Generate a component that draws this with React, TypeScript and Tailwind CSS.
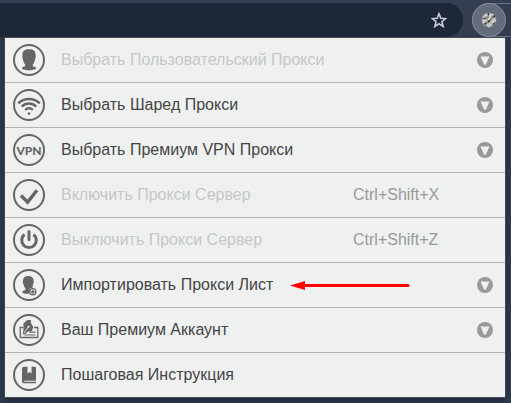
import React from 'react';

type MenuItem = {
  label: string;
  icon: React.ReactNode;
  disabled?: boolean;
  shortcut?: string;
  expandable?: boolean;
  highlighted?: boolean;
};

const RoundIcon = ({ children }: { children: React.ReactNode }) => (
  <svg viewBox="0 0 32 32" className="w-8 h-8 shrink-0 text-[#666666]" fill="currentColor" aria-hidden="true">
    <circle cx="16" cy="16" r="15" fill="none" stroke="currentColor" strokeWidth="2" />
    {children}
  </svg>
);

const UserIcon = () => (
  <RoundIcon>
    <path d="M16 5.300c-4.500 0-6.500 1.800-6.500 5 0 1.200-.4 1.600-.1 3.200.2 1.200.5 1.400.7 2.200.3 2 1 3.800 2.100 4.900v1.600l-2.400.8c-1 .4-1.100 1.900-.2 2.300 4 1.500 8.800 1.500 12.800 0 .9-.4.800-1.900-.2-2.300l-2.400-.8v-1.600c1.100-1.100 1.800-2.900 2.100-4.900.2-.8.500-1 .7-2.200.3-1.600-.1-2-.1-3.200 0-3.200-2-5-6.500-5z" />
  </RoundIcon>
);

const WifiIcon = () => (
  <RoundIcon>
    <g fill="none" stroke="currentColor" strokeWidth="2.500">
      <path d="M5.200 14.300c6-5.900 15.600-5.900 21.600 0" />
      <path d="M8.700 17.600c4-4 10.600-4 14.600 0" />
      <path d="M12.200 21c2.100-2.200 5.500-2.200 7.600 0" />
    </g>
    <circle cx="16" cy="24.600" r="1.300" />
  </RoundIcon>
);

const VpnIcon = () => (
  <RoundIcon>
    <text x="16" y="20.500" textAnchor="middle" className="font-['Lato',sans-serif] text-[12px] font-black">
      VPN
    </text>
  </RoundIcon>
);

const CheckIcon = () => (
  <RoundIcon>
    <path d="M8 16.500l6.600 6.600L24 11.200" fill="none" stroke="currentColor" strokeWidth="3.400" />
  </RoundIcon>
);

const PowerIcon = () => (
  <RoundIcon>
    <g fill="none" stroke="currentColor" strokeWidth="3">
      <path d="M11.500 10.500a7.300 7.300 0 1 0 9 0" />
      <path d="M16 7.500v8" strokeLinecap="round" />
    </g>
  </RoundIcon>
);

const UserAddIcon = () => (
  <RoundIcon>
    <path d="M15.200 7c-3.500 0-5.200 1.700-5.200 4.500 0 .9-.4 1.200-.1 2.300.2.900.5 1 .7 1.700.3 1.700 1 3 1.900 3.900v1.500l-2.400.9c-.8.400-.9 1.800-.2 2.100 2 .8 4.500 1 6.800.7v-5.300h2.500c.4-.8.600-2 .8-3.800.2-.7.500-.8.700-1.700.3-1.100-.2-1.400-.2-2.300C20.500 8.700 18.700 7 15.200 7z" />
    <circle cx="19.800" cy="22.800" r="3.100" fill="#eff1f1" stroke="currentColor" strokeWidth="1.300" />
    <path d="M19.800 20.900v3.800M17.900 22.800h3.800" stroke="currentColor" strokeWidth="1.400" />
  </RoundIcon>
);

const AccountIcon = () => (
  <RoundIcon>
    <path d="M10 13.500H7.200v10h17.600v-10h-3.800" fill="none" stroke="currentColor" strokeWidth="1.300" />
    <path d="M10.300 9.500l4-3.500h3.700l-.2 2.700 2.500 4.200-1.400 4.300-3.800.3-3.300 2.700-2.200.2.900-4.900z" />
    <path d="M16.500 18.200h6M11.500 21h11" fill="none" stroke="currentColor" strokeWidth="1.200" />
    <circle cx="15.500" cy="12.700" r="1" fill="#eff1f1" />
    <path d="M15.300 13l-4.400 6.200" stroke="#eff1f1" strokeWidth=".8" />
  </RoundIcon>
);

const BookIcon = () => (
  <RoundIcon>
    <path d="M11 7.700h3.500v6.800l2-1.600 2 1.600V7.700H22a1 1 0 0 1 1 1v13.100H11.300v1h11.700v1.500H11a2 2 0 0 1-2-2V9.700a2 2 0 0 1 2-2z" />
  </RoundIcon>
);

const ExpandIcon = () => (
  <svg viewBox="0 0 16 16" className="w-4 h-4 mr-3 shrink-0" aria-hidden="true">
    <circle cx="8" cy="8" r="8" fill="#999999" />
    <path d="M3.500 4.500h9L8.800 12.800H7.200z" fill="#eff1f1" />
  </svg>
);

const PointerArrow = () => (
  <svg viewBox="0 0 120 10" className="w-[120px] h-[10px] ml-[17px] shrink-0" aria-hidden="true">
    <path d="M14 5.500h104" stroke="#ff0000" strokeWidth="3" strokeLinecap="round" />
    <path d="M0 5.500L15 1v9z" fill="#ff0000" />
  </svg>
);

const ITEMS: MenuItem[] = [
  { label: 'Выбрать Пользовательский Прокси', icon: <UserIcon />, disabled: true, expandable: true },
  { label: 'Выбрать Шаред Прокси', icon: <WifiIcon />, expandable: true },
  { label: 'Выбрать Премиум VPN Прокси', icon: <VpnIcon />, expandable: true },
  { label: 'Включить Прокси Сервер', icon: <CheckIcon />, disabled: true, shortcut: 'Ctrl+Shift+X' },
  { label: 'Выключить Прокси Сервер', icon: <PowerIcon />, disabled: true, shortcut: 'Ctrl+Shift+Z' },
  { label: 'Импортировать Прокси Лист', icon: <UserAddIcon />, expandable: true, highlighted: true },
  { label: 'Ваш Премиум Аккаунт', icon: <AccountIcon />, expandable: true },
  { label: 'Пошаговая Инструкция', icon: <BookIcon /> },
];

const MenuRow = ({ item }: { item: MenuItem }) => (
  <li className="border-b border-[#b2b3b3] last:border-b-0">
    <button
      type="button"
      disabled={item.disabled}
      className="w-full h-11 pl-2 flex items-center text-left text-[#444444] disabled:text-[#c6c7c7]"
    >
      {item.icon}
      <span className="ml-4 whitespace-nowrap">{item.label}</span>
      {item.highlighted && <PointerArrow />}
      <span className="flex-1"></span>
      {item.shortcut && <span className="w-[152px] shrink-0 text-[#999999]">{item.shortcut}</span>}
      {item.expandable && <ExpandIcon />}
    </button>
  </li>
);

const BrowserBar = () => (
  <header className="flex pt-[3px] bg-[#343e50]">
    <div className="flex-1 h-[34px] flex items-center justify-end pr-4 rounded-r-full bg-[#1e2738]">
      <button type="button" aria-label="Добавить в закладки">
        <svg viewBox="0 0 16 16" className="w-4 h-4" aria-hidden="true">
          <path
            d="M8 1.700l1.800 4.600 4.900.3-3.800 3.100 1.300 4.800L8 11.800l-4.200 2.700 1.300-4.800-3.800-3.100 4.900-.3z"
            fill="none"
            stroke="#c6cbd6"
            strokeWidth="1.600"
          />
        </svg>
      </button>
    </div>
    <div className="ml-[9px] w-[39px] h-[34px] rounded-l-full border border-r-0 border-[#6c7484]">
      <button
        type="button"
        aria-label="Расширение"
        className="-ml-px -mt-px w-[34px] h-[34px] flex items-center justify-center rounded-full border border-[#858b97] bg-[#646b7a]"
      >
        <svg viewBox="0 0 16 16" className="w-4 h-4" aria-hidden="true">
          <circle cx="8" cy="8" r="7.500" fill="#8f8f8c" />
          <path d="M1.500 4.500L5 1.200 7 3 3.500 6.200zM9 1l4 1.500-4.500 4L7.500 4zM.8 8L5 7l1.500 2.500L2 12zM9 9l5-4 1 4-3.500 3.500zM5 13l4-3 2 2.500L8 15.500z" fill="#c9c9c5" />
          <path d="M6.500 1l2 .3-1.200 3zM2 6.500l3.500-1.200L4 7.500zM11 5.500l2.500-2.500 1 2.200zM3 11.500l3-2-1.800 3.500zM11.500 12l2.500-2-.8 3zM8.500 7.500l1.800-.5L8 11 6.500 9.500z" fill="#40413e" />
          <path d="M6 7.500L9.500 5l-1 3z" fill="#f2f2ee" />
        </svg>
      </button>
    </div>
  </header>
);

export default function App() {
  return (
    <div className="min-h-screen bg-[#303b4f] font-['Liberation_Sans',Arial,sans-serif] text-base">
      <BrowserBar />
      <main className="pl-[5px] pr-1.5 pb-[5px]">
        <ul className="mt-px bg-[#eff1f1] shadow-[0_0_0_1px_#454a53,0_2px_5px_1px_#1b2434]">
          {ITEMS.map((item) => (
            <MenuRow key={item.label} item={item} />
          ))}
        </ul>
      </main>
    </div>
  );
}
